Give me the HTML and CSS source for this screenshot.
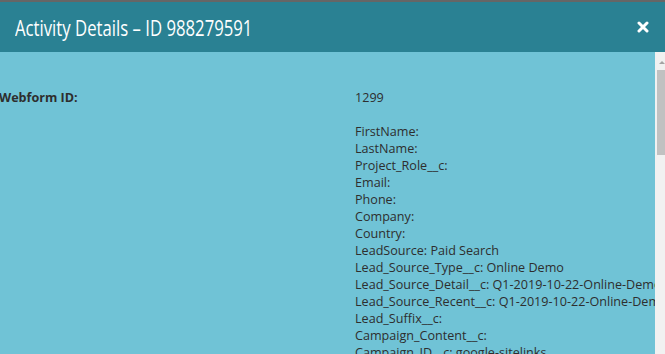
FILE: index.html
```html
<!DOCTYPE html>
<html>
<head>
    <title>Activity Details</title>
    <link rel="stylesheet" href="styles.css">
</head>
<body>
    <div class="topline"></div>
    <div class="header">
        <h1 class="title"><span>Activity Details &ndash; ID 988279591</span></h1>
        <button class="close" aria-label="Close">
            <svg width="12" height="12" viewBox="0 0 12 12">
                <path d="M2 2 L10 10 M10 2 L2 10" stroke="#fff" stroke-width="3" stroke-linecap="round"/>
            </svg>
        </button>
    </div>
    <div class="content">
        <div class="pane">
            <div class="row">
                <div class="label">Webform ID:</div>
                <div class="value">1299</div>
            </div>
            <div class="row">
                <div class="label"></div>
                <div class="value">
                    FirstName:<br>
                    LastName:<br>
                    Project_Role__c:<br>
                    Email:<br>
                    Phone:<br>
                    Company:<br>
                    Country:<br>
                    LeadSource: Paid Search<br>
                    Lead_Source_Type__c: Online Demo<br>
                    Lead_Source_Detail__c: Q1-2019-10-22-Online-Demo<br>
                    Lead_Source_Recent__c: Q1-2019-10-22-Online-Demo<br>
                    Lead_Suffix__c:<br>
                    Campaign_Content__c:<br>
                    Campaign_ID__c: google-sitelinks<br>
                    Campaign_Medium__c: cpc
                </div>
            </div>
        </div>
        <div class="scrollbar">
            <div class="arrow"></div>
            <div class="thumb"></div>
        </div>
    </div>
</body>
</html>
```

FILE: styles.css
```css
html, body {
    margin: 0;
    height: 100%;
    overflow: hidden;
}

body {
    font-family: "Open Sans", "Liberation Sans", sans-serif;
    display: flex;
    flex-direction: column;
    background-color: #70c3d6;
}

.topline {
    height: 2px;
    background-color: #666;
}

.header {
    height: 50px;
    background-color: #2a8193;
    display: flex;
    align-items: center;
    justify-content: space-between;
    padding: 0 16px 0 15px;
}

.title {
    margin: 0;
    font-size: 22px;
    font-weight: normal;
    color: #fff;
    white-space: nowrap;
}

.title span {
    display: inline-block;
    transform: scaleX(0.76);
    transform-origin: left center;
}

.close {
    background: none;
    border: none;
    padding: 0;
    width: 12px;
    height: 12px;
    cursor: pointer;
    display: flex;
}

.content {
    flex: 1;
    display: flex;
    min-height: 0;
}

.pane {
    flex: 1;
    overflow: hidden;
    padding-top: 37px;
    font-size: 12.6px;
    line-height: 17px;
    color: #2e2e2e;
    white-space: nowrap;
}

.row {
    display: flex;
    margin-bottom: 17px;
}

.label {
    width: 356px;
    margin-left: -1px;
    font-weight: bold;
    flex-shrink: 0;
}

.scrollbar {
    width: 10px;
    background-color: #f1f1f1;
    display: flex;
    flex-direction: column;
    align-items: flex-end;
}

.arrow {
    width: 0;
    height: 0;
    margin-top: 9px;
    border-left: 3px solid transparent;
    border-right: 3px solid transparent;
    border-bottom: 3px solid #a3a3a3;
}

.thumb {
    width: 8px;
    height: 85px;
    margin-top: 6px;
    background-color: #c1c1c1;
}
```
